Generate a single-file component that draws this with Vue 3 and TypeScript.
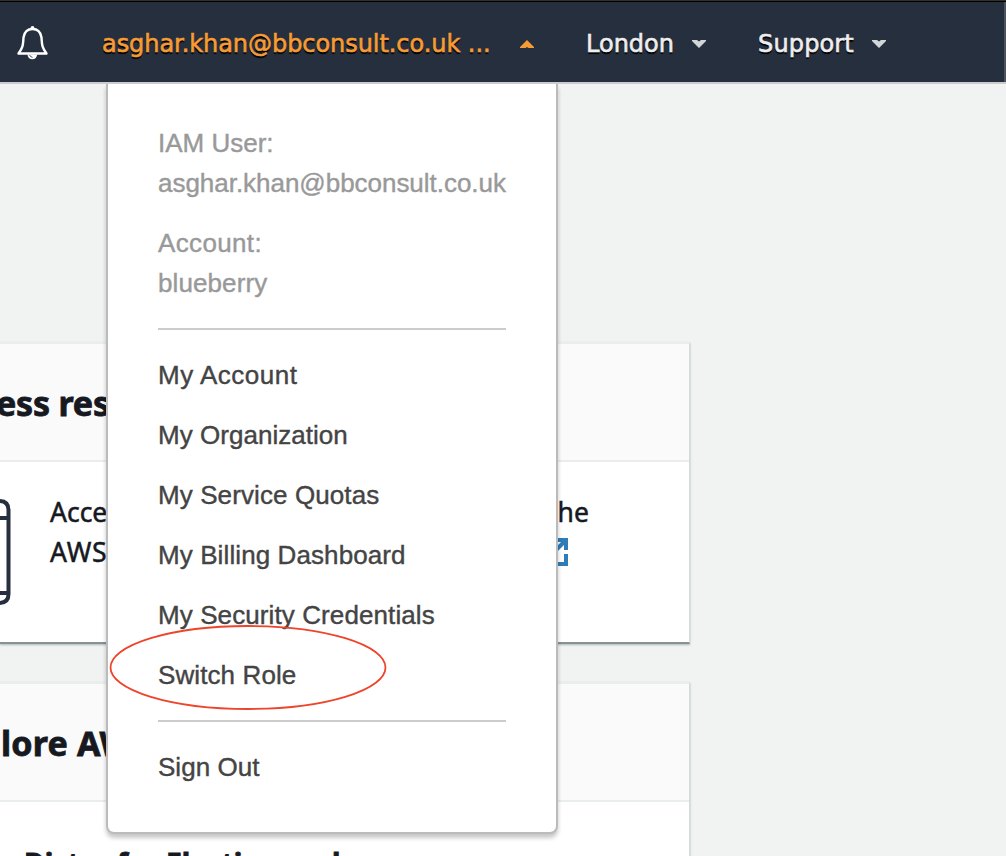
<script setup lang="ts">
interface MenuItem {
  label: string
  kind?: string
}

const items: MenuItem[] = [
  { label: 'My Account', kind: 'wide' },
  { label: 'My Organization', kind: 'plain' },
  { label: 'My Service Quotas' },
  { label: 'My Billing Dashboard' },
  { label: 'My Security Credentials' },
  { label: 'Switch Role' },
]
</script>

<template>
  <div class="page">
    <header class="nav">
      <svg class="bell" width="32" height="36" viewBox="0 0 32 36">
        <path d="M1.5 28.5C6.5 22 6 19 6.5 12.5C7.5 6 10.5 4 15.5 4S23.5 6 24.5 12.5C25 19 24.5 22 29.5 28.5Z" fill="none" stroke="#fff" stroke-width="2.4" stroke-linejoin="round" />
        <circle cx="15.5" cy="2.8" r="1.9" fill="#fff" />
        <path d="M10.5 29.5a4.8 4.8 0 0 0 9.6 0z" fill="#fff" />
        <path d="M12.6 30q.8 2.2 3 2.4" fill="none" stroke="#252f3e" stroke-width=".8" />
      </svg>
      <span class="user">asghar.khan@bbconsult.co.uk ...</span>
      <svg class="caret up" width="14" height="8" viewBox="0 0 14 8"><path d="M7 0L14 7V8H8.5L7 7L5.500 8H0V7Z" fill="#f79c34" /></svg>
      <span class="london">London</span>
      <svg class="caret" width="14" height="8" viewBox="0 0 14 8"><path d="M0 0H5L7 1.500L9 0H14V1L7 8L0 1Z" fill="#d4d5d7" /></svg>
      <span class="support">Support</span>
      <svg class="caret" width="14" height="8" viewBox="0 0 14 8"><path d="M0 0H5L7 1.500L9 0H14V1L7 8L0 1Z" fill="#d4d5d7" /></svg>
    </header>

    <main class="body">
      <section class="card">
        <h2><span class="t1">ess res</span></h2>
        <div class="content">
          <svg class="phone" width="11" height="106" viewBox="0 0 11 106">
            <path d="M-10 2H-1Q8.500 2 8.500 11V95Q8.500 104 -1 104H-10M-10 19H9M-10 94H9" fill="none" stroke="#252f3e" stroke-width="4" />
          </svg>
          <div class="left"><p>Acce</p><p class="aws">AWS</p></div>
          <div class="right">
            <p>the</p>
            <svg class="ext" width="28" height="28" viewBox="0 0 28 28">
              <path d="M12 2H26V12M26 2L10 18M26 16V26H2V2H7" fill="none" stroke="#2e7cb8" stroke-width="4" />
            </svg>
          </div>
        </div>
      </section>
      <section class="card second">
        <h2><span class="t2">lore AW</span></h2>
        <h3>Distro for Elasticsearch</h3>
      </section>
    </main>

    <aside class="menu">
      <p class="info">IAM User:</p>
      <p class="info addr">asghar.khan@bbconsult.co.uk</p>
      <p class="info gap">Account:</p>
      <p class="info blue">blueberry</p>
      <hr>
      <nav>
        <a v-for="item in items" :key="item.label" :class="item.kind">{{ item.label }}</a>
      </nav>
      <hr class="last">
      <a class="plain">Sign Out</a>
    </aside>
    <svg class="mark" width="280" height="88" viewBox="0 0 280 88">
      <ellipse cx="140" cy="43.500" rx="137.5" ry="41.5" fill="none" stroke="#ee4429" stroke-width="1.8" />
    </svg>
  </div>
</template>

<style>
body { margin: 0; }
</style>
<style scoped>
* { box-sizing: border-box; }
.page { position: relative; width: 1006px; height: 856px; overflow: hidden; background: #f1f3f3; font-family: "Noto Sans", sans-serif; color: #16191f; }
p, h2, h3 { margin: 0; }
.nav { display: flex; align-items: center; height: 84px; padding: 5px 0 0 17px; background: #252f3e; border-top: 1px solid #33312e; border-bottom: 2px solid #ccc; box-shadow: inset 0 1px #000, inset -2px 0 #4c535d; font: 24px/36px "DejaVu Sans", sans-serif; color: #eee; text-shadow: 0 2px 1px #000; -webkit-text-stroke: .6px currentColor; }
.bell { flex: none; margin-top: -3px; }
.user { flex: none; width: 390px; margin-left: 53px; color: #f79c34; white-space: nowrap; letter-spacing: -.06px; }
.caret { flex: none; }
.up { margin-left: 28px; }
.london { width: 88px; margin-left: 52px; }
.london + .caret { margin-left: 18px; }
.support { width: 97px; margin-left: 52px; letter-spacing: .15px; }
.support + .caret { margin-left: 17px; }
.body { padding-top: 258px; }
.card { width: 690px; height: 302px; background: #fff; border-top: 2px solid #eaeded; border-right: 1px solid #d5dbdb; border-bottom: 2px solid #879196; box-shadow: 0 1px 2px #aab7b8; }
.second { margin-top: 38px; }
h2 { display: flex; align-items: center; height: 118px; padding-top: 2px; background: #fafafa; border-bottom: 2px solid #eaeded; font-size: 34px; font-weight: 700; line-height: 48px; white-space: nowrap; -webkit-text-stroke: .8px currentColor; }
.t1 { margin-left: -4px; letter-spacing: -.2px; }
.t2 { margin-left: 1px; letter-spacing: .2px; }
.content { display: flex; align-items: flex-start; padding-top: 30px; font-size: 26.5px; line-height: 40px; -webkit-text-stroke: .5px currentColor; }
.phone { flex: none; margin-top: 7px; }
.left { flex: none; width: 495px; padding-left: 39px; }
.aws { letter-spacing: .8px; }
.right { padding-left: 42px; }
.ext { display: block; margin: 6px 0 0 -8px; }
h3 { padding: 41px 0 0 24px; font-size: 28.4px; line-height: 40px; white-space: nowrap; -webkit-text-stroke: .8px currentColor; }
.menu { position: absolute; left: 106px; top: 84px; width: 452px; height: 750px; padding: 39px 50px; background: #fff; border: 2px solid #bbb; border-top: 0; border-radius: 0 0 8px 8px; box-shadow: 0 4px 4px rgba(0,0,0,.22); font: 26px/40px "Liberation Sans", sans-serif; color: #444; -webkit-text-stroke: .4px currentColor; }
.info { color: #999; white-space: nowrap; }
.addr { letter-spacing: -.03px; }
.gap { margin-top: 20px; letter-spacing: .35px; }
.blue { letter-spacing: .1px; }
hr { height: 2px; margin: 25px 0 15px; border: 0; background: #ccc; }
.menu a { display: block; height: 60px; line-height: 60px; white-space: nowrap; letter-spacing: .1px; }
.menu a.wide { letter-spacing: .5px; }
.menu a.plain { letter-spacing: .03px; }
hr.last { margin: 15px 0; }
.mark { position: absolute; left: 108px; top: 624px; }
</style>
